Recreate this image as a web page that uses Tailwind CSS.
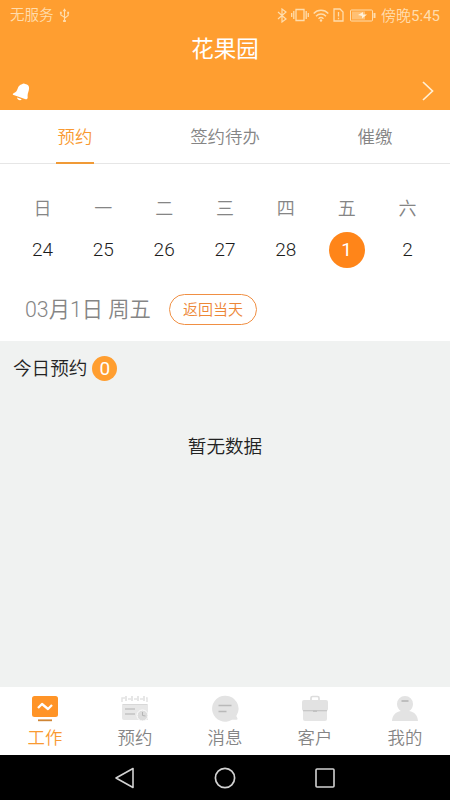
<!DOCTYPE html>
<html lang="zh-CN">
<head>
<meta charset="utf-8">
<meta name="viewport" content="width=device-width, initial-scale=1">
<title>花果园</title>
<script src="https://cdn.jsdelivr.net/npm/@tailwindcss/browser@4"></script>
</head>
<body class="bg-white">
<div class="flex h-[800px] w-[450px] flex-col overflow-hidden bg-white font-['Roboto','Noto_Sans_CJK_SC',sans-serif] font-[350] text-[#858585]">
  <header class="flex h-[110px] flex-col bg-[#ff9e30] text-white">
    <div class="flex h-[30px] items-center justify-between pr-[10px] pl-[10px] text-[#ffddad]">
      <div class="flex items-center gap-[5px] pt-[2px] text-[14.5px] leading-none">
        <span>无服务</span>
        <svg class="mb-[2px] h-[14px] w-[11px]" viewBox="0 0 12 15" fill="none" stroke="currentColor" stroke-width="1.2"><path d="M6 3v10M6 10 2 7.500V5M6 11l4-3V5"/><path d="M6 0 4 3.500h4zM4.500 13h3v2h-3zM1 4h2v2H1zM9 4h2v2H9z" fill="currentColor" stroke="none"/></svg>
      </div>
      <div class="flex items-center text-[15px] leading-none">
        <svg class="mr-[4px] h-[15px] w-[10px]" viewBox="0 0 10 15" fill="none" stroke="currentColor" stroke-width="1.2"><path d="m1 4 8 7-4 3V1l4 3-8 7"/></svg>
        <svg class="mr-[4px] h-[14px] w-[18px]" viewBox="0 0 18 14" fill="none" stroke="currentColor" stroke-width="1.300"><path d="M5 1.500h8v11H5zM2.800 3v8M15.200 3v8M.7 5v4M17.300 5v4"/></svg>
        <svg class="mr-[4px] h-[13px] w-[16px]" viewBox="0 0 16 13" fill="none" stroke="currentColor" stroke-width="1.400"><path d="M.7 4.500c4-4.300 10.600-4.300 14.600 0M3 7.200c2.800-2.900 7.200-2.900 10 0M5.500 9.700c1.500-1.400 3.500-1.400 5 0"/><circle cx="8" cy="11.500" r="1.200" fill="currentColor" stroke="none"/></svg>
        <svg class="mr-[6px] h-[14px] w-[11px]" viewBox="0 0 11 14" fill="none" stroke="currentColor" stroke-width="1.300"><path d="M1 1h6l3 3v9H1zM5.500 4v4.500M5.500 9.800v1.500"/></svg>
        <svg class="mr-[5px] h-[13px] w-[26px]" viewBox="0 0 26 13" fill="none" stroke="currentColor"><rect x=".5" y="1" width="22" height="11" rx="1"/><path d="M2 2.500h13v8H2z" fill="currentColor" fill-opacity=".55" stroke="none"/><path d="M24.500 4v5" stroke-width="2"/><path d="m8 6 5-3v2.500h4l-5 4V7z" fill="#fff1d9" stroke="none"/></svg>
        <span class="pt-[2px]">傍晚<span class="font-normal">5:45</span></span>
      </div>
    </div>
    <h1 class="flex h-[36px] items-center justify-center pt-[2px] text-[22.5px] leading-none font-normal">花果园</h1>
    <div class="flex h-[44px] items-center justify-between pt-[11px] pr-[16px] pb-[5px] pl-[12px]">
      <svg class="mt-[2px] h-[18px] w-[18px]" viewBox="0 0 18 18" fill="currentColor"><path d="M10 1.300c.8-1 2.400-1.300 3.200-.2 2.600.4 3.900 1.700 3.900 4 0 3-1.700 5.300-1.500 8 .1 1.200.3 2-.6 3-.6.500-1.300.2-2.100-.2L1.600 12c-1.200-.5-1-1.300 0-1.700 2.800-1 3.400-2.800 4.200-5C6.500 3.200 7.800 1.800 10 1.300zM5 14.600l4.700 1.700c-1 1.900-4.200 1.100-4.700-1.700z"/></svg>
      <svg class="h-[20px] w-[12px]" viewBox="0 0 12 20" fill="none" stroke="#ffefd4" stroke-width="1.700"><path d="m1 1 9.500 9L1 19"/></svg>
    </div>
  </header>

  <nav class="grid h-[54px] grid-cols-3 border-b border-[#e6e6e6] text-[17.4px] leading-none">
    <div class="relative flex items-center justify-center pt-[2px] text-[#f99a31]">预约<span class="absolute bottom-[-1px] h-[2px] w-[38px] bg-[#f09a36]"></span></div>
    <div class="flex items-center justify-center pt-[2px]">签约待办</div>
    <div class="flex items-center justify-center pt-[2px]">催缴</div>
  </nav>

  <section class="h-[177px] pt-[27px]">
    <div class="grid grid-cols-7 px-[12px] text-center text-[18px] leading-[36px]">
      <span>日</span><span>一</span><span>二</span><span>三</span><span>四</span><span>五</span><span>六</span>
    </div>
    <div class="mt-[5px] grid grid-cols-7 justify-items-center px-[12px] text-center text-[19px] leading-[36px] text-[#1c1c1c]">
      <span>24</span><span>25</span><span>26</span><span>27</span><span>28</span><span class="size-[36px] rounded-full bg-[#ff8519] font-normal text-white">1</span><span>2</span>
    </div>
    <div class="mt-[26px] flex items-center pl-[25px]">
      <span class="w-[144px] text-[21.3px] leading-[30px] whitespace-nowrap">03月1日 周五</span>
      <button class="flex h-[31px] w-[88px] items-center justify-center rounded-full border-[1.5px] border-[#f08f43] pt-[1px] text-[15px] leading-none text-[#ed8737]">返回当天</button>
    </div>
  </section>

  <main class="h-[346px] bg-[#f0f2f1] pt-[14px] text-[#222]">
    <div class="flex h-[26px] items-center gap-[5px] pl-[13px] text-[18.600px] leading-none">
      <h2 class="pt-[2px]">今日预约</h2><span class="flex size-[25px] items-center justify-center rounded-full bg-[#ff9e30] text-[19px] font-normal text-white">0</span>
    </div>
    <p class="mt-[52px] text-center text-[18.600px] leading-[28px]">暂无数据</p>
  </main>

  <nav class="grid h-[68px] grid-cols-5 pt-[8px] text-[17.4px] leading-[26px]">
    <div class="flex flex-col items-center text-[#f99a31]">
      <svg class="h-[28px] w-[28px]" viewBox="0 0 28 28"><rect x="1" y="1" width="26" height="21" rx="2.500" fill="#ff9427"/><path d="m7 13 4-4 6 5 4-4" fill="none" stroke="#fff" stroke-width="2.300" stroke-linejoin="round"/><path d="M7 25.300h14" stroke="#cf8534" stroke-width="1.800"/></svg>
      <span class="mt-[2px]">工作</span>
    </div>
    <div class="flex flex-col items-center">
      <svg class="h-[28px] w-[28px]" viewBox="0 0 28 28"><path d="M1 9h26v16H3a2 2 0 0 1-2-2z" fill="#e7e7e7"/><path d="M1 7V3h3M7 4h3M13 4h3M19 4h3M25 3h1v4" fill="none" stroke="#e4e4e4" stroke-width="1.500"/><path d="M5 1v5M11 1v5M17 1v5M23 1v5" stroke="#e2e2e2" stroke-width="1.700"/><path d="M2 9.500h24" stroke="#d8d8d8"/><path d="M4 14h10M4 19h10" stroke="#c4c4c4" stroke-width="1.500"/><circle cx="21.500" cy="20.500" r="5.500" fill="#ddd" stroke="#fff"/><path d="M21.500 17v3.500l3 .5" fill="none" stroke="#b5b5b5"/></svg>
      <span class="mt-[2px]">预约</span>
    </div>
    <div class="flex flex-col items-center">
      <svg class="h-[28px] w-[28px]" viewBox="0 0 28 28"><path d="M14 .7a13 13 0 1 0 7 24h4.500c1 0 1.300-.7.800-1.600l-1-2.200A13 13 0 0 0 14 .7z" fill="#e3e3e3"/><path d="M7.500 10.500h13M7.500 16.500h8" stroke="#b9b9b9" stroke-width="1.600"/></svg>
      <span class="mt-[2px]">消息</span>
    </div>
    <div class="flex flex-col items-center">
      <svg class="h-[28px] w-[28px]" viewBox="0 0 28 28"><path d="M10 5V3q0-1.500 1.500-1.500h5Q18 1.500 18 3v2" fill="none" stroke="#ddd" stroke-width="1.700"/><rect x="1" y="5" width="26" height="11" rx="2" fill="#e2e2e2"/><path d="M2 16h24v8q0 2-2 2H4q-2 0-2-2z" fill="#e5e5e5"/><path d="M2 15.700h24" stroke="#c4c4c4" stroke-width="1.200"/><path d="M12 15h4v2h-4z" fill="#c2c2c2"/></svg>
      <span class="mt-[2px]">客户</span>
    </div>
    <div class="flex flex-col items-center">
      <svg class="h-[28px] w-[28px]" viewBox="0 0 28 28"><path d="M14 1a8 8 0 0 0-8 8c0 3 1.500 5.400 3.800 7C4.500 17.200 1.500 20 1 26h26c-.5-6-3.500-8.800-8.800-10A8.400 8.400 0 0 0 22 9a8 8 0 0 0-8-8z" fill="#e3e3e3"/><path d="M10.500 6h7" stroke="#b5b5b5" stroke-width="1.600"/></svg>
      <span class="mt-[2px]">我的</span>
    </div>
  </nav>

  <footer class="flex h-[45px] items-center justify-center gap-[78px] bg-black text-[#d2d2d2]">
    <svg class="size-[22px]" viewBox="0 0 22 22" fill="none" stroke="currentColor" stroke-width="1.600" stroke-linejoin="round"><path d="M19 1.500v19L2 11z"/></svg>
    <svg class="size-[22px]" viewBox="0 0 22 22" fill="none" stroke="currentColor" stroke-width="1.700"><circle cx="11" cy="11" r="9.600"/></svg>
    <svg class="size-[22px]" viewBox="0 0 22 22" fill="none" stroke="currentColor" stroke-width="1.600"><rect x="2" y="2" width="18" height="18" rx="1"/></svg>
  </footer>
</div>
</body>
</html>
